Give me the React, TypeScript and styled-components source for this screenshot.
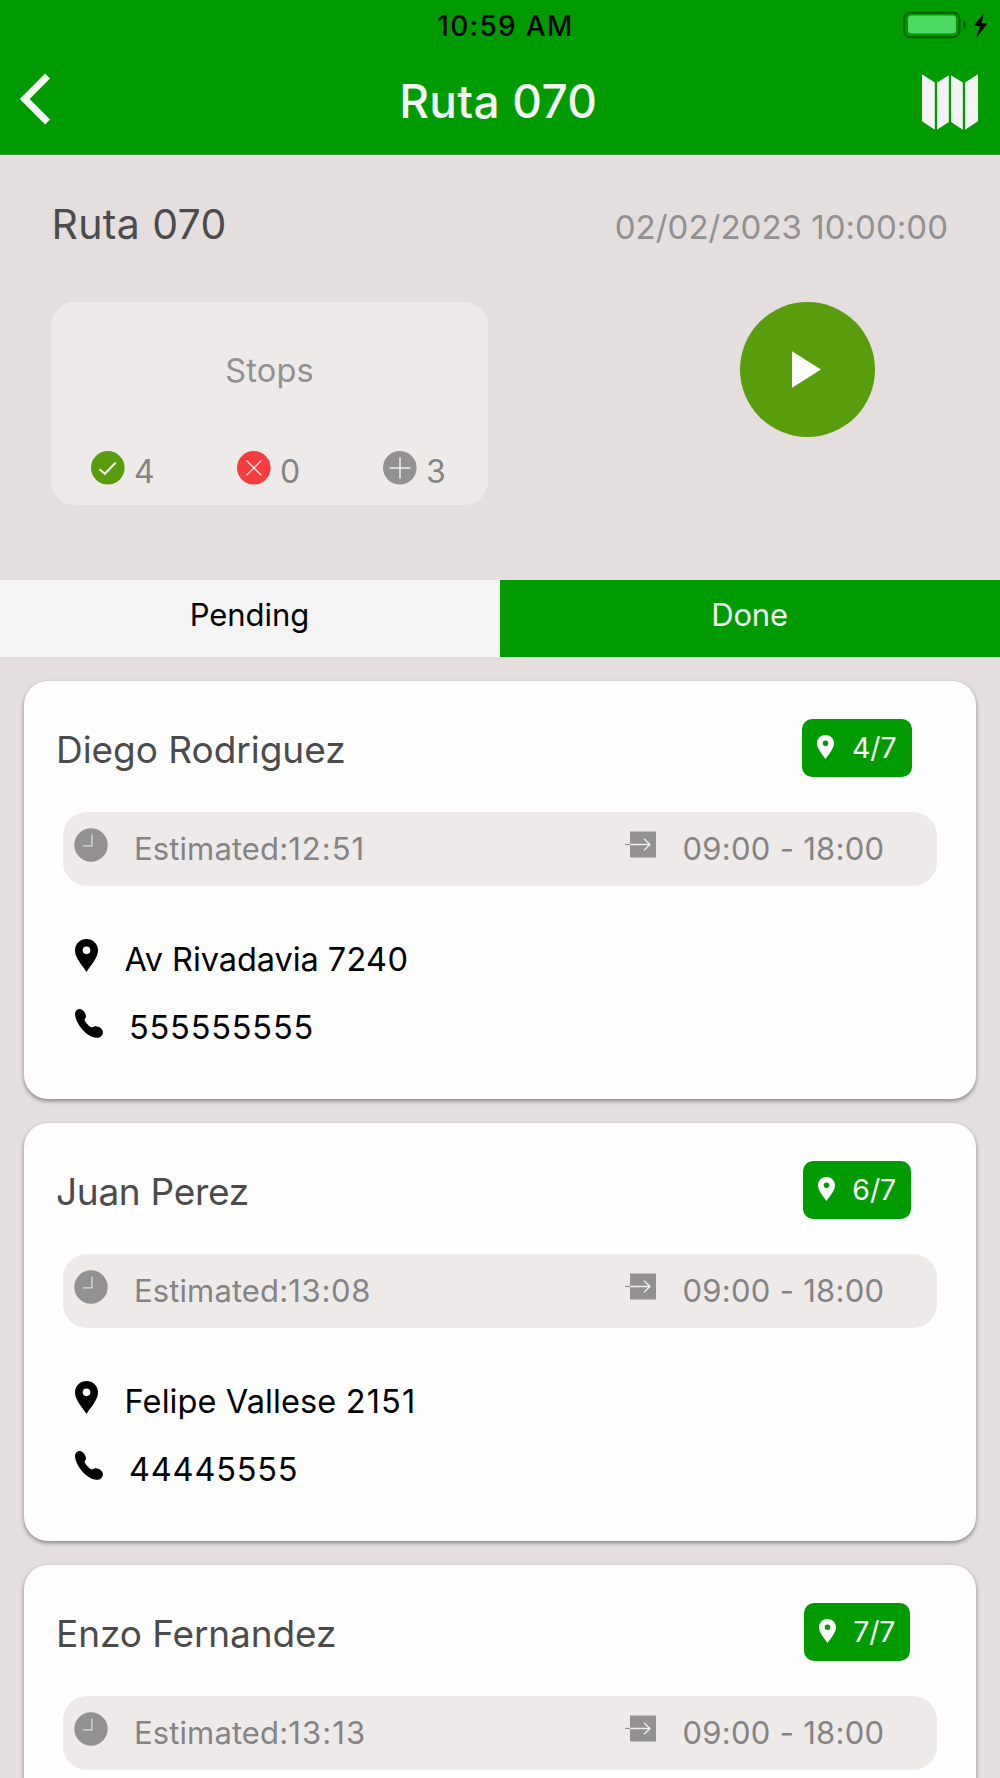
import React from 'react';
import styled, { createGlobalStyle } from 'styled-components';

const GREEN = '#009b00';
const OLIVE = '#579d0c';
const GREY = '#929091';
const PANEL = '#eeeaea';

const GlobalStyle = createGlobalStyle`
  * { box-sizing: border-box; }
  body {
    margin: 0;
    background: #e4dedf;
    font-family: Inter, "Liberation Sans", sans-serif;
    -webkit-font-smoothing: antialiased;
  }
`;

const Screen = styled.div`
  width: 1000px;
  height: 1778px;
  overflow: hidden;
  display: flex;
  flex-direction: column;
`;

const Text = styled.span<{ $size: number; $color: string; $weight?: number; $spacing?: number }>`
  font-size: ${p => p.$size}px;
  color: ${p => p.$color};
  font-weight: ${p => p.$weight ?? 400};
  letter-spacing: ${p => p.$spacing ?? 0}px;
  white-space: pre;
`;

const Digits = styled.span<{ $spacing: number }>`
  letter-spacing: ${p => p.$spacing}px;
`;

const Header = styled.header`
  height: 155px;
  flex: none;
  background: ${GREEN};
  border-bottom: 1px solid #3c8f3c;
`;

const StatusBar = styled.div`
  height: 51px;
  display: grid;
  grid-template-columns: 1fr auto 1fr;
  align-items: center;
  padding: 0 11px 0 22px;
`;

const Power = styled.div`
  grid-column: 3;
  justify-self: end;
  display: flex;
  margin-bottom: 2px;
`;

const Clock = styled.div`
  grid-column: 2;
`;

const NavBar = styled.div`
  height: 101px;
  display: grid;
  grid-template-columns: 56px 1fr 56px;
  align-items: center;
  padding: 0 22px 0 18.5px;
  text-align: center;
`;

const NavTitle = styled.div`
  padding-bottom: 2px;
`;

const BackIcon = styled.svg`
  display: block;
  margin-bottom: 5px;
`;

const Summary = styled.section`
  height: 425px;
  flex: none;
  padding: 44px 52px 0 51.5px;
`;

const SummaryHead = styled.div`
  display: flex;
  height: 50px;
  justify-content: space-between;
  align-items: baseline;
  line-height: 50px;
`;

const SummaryBody = styled.div`
  display: flex;
  justify-content: space-between;
  margin: 53px 73px 0 -0.5px;
`;

const StopsCard = styled.div`
  width: 437px;
  height: 203px;
  border-radius: 24px;
  background: ${PANEL};
  padding-top: 49px;
  text-align: center;
`;

const StopsLabel = styled.div`
  height: 40px;
  line-height: 40px;
`;

const Counters = styled.div`
  display: grid;
  grid-template-columns: repeat(3, 146px);
  margin-top: 60px;
  line-height: 41px;
`;

const Counter = styled.div`
  display: flex;
  gap: 9px;
  padding-left: 40px;
`;

const PlayButton = styled.button`
  width: 135px;
  height: 135px;
  border: 0;
  padding: 0 0 0 52px;
  border-radius: 50%;
  background: ${OLIVE};
  display: flex;
  align-items: center;
`;

const Tabs = styled.nav`
  display: grid;
  grid-template-columns: 1fr 1fr;
  flex: none;
`;

const Tab = styled.div<{ $active?: boolean }>`
  height: 77px;
  line-height: 69px;
  padding-right: 1px;
  text-align: center;
  background: ${p => (p.$active ? GREEN : '#f4f4f4')};
`;

const List = styled.main`
  display: flex;
  flex-direction: column;
  gap: 24px;
  padding: 24px;
`;

const Card = styled.article`
  height: 418px;
  flex: none;
  border-radius: 24px;
  background: #fefefe;
  box-shadow: 0 2px 4px rgba(0, 0, 0, 0.42);
  padding: 38px 39px 0;
`;

const CardHead = styled.div`
  display: grid;
  grid-template-columns: 1fr 160px;
  line-height: 61px;
  height: 58px;
  margin-left: -7px;
`;

const Badge = styled.div`
  justify-self: center;
  height: 58px;
  display: flex;
  align-items: center;
  gap: 17.5px;
  padding: 0 15px;
  border-radius: 10px;
  background: ${GREEN};
  line-height: 58px;
`;

const InfoBar = styled.div`
  display: grid;
  grid-template-columns: 562px 1fr;
  height: 74px;
  margin-top: 35px;
  border-radius: 24px;
  background: ${PANEL};
  line-height: 74px;
`;

const Info = styled.div<{ $gap: number; $inset?: number }>`
  display: flex;
  align-items: center;
  gap: ${p => p.$gap}px;
  padding-left: ${p => p.$inset ?? 0}px;
`;

const Raised = styled.svg<{ $lift: number }>`
  display: block;
  flex: none;
  margin-bottom: ${p => p.$lift}px;
`;

const Contacts = styled.div`
  margin-top: 40px;
  line-height: 68px;
`;

const PIN = 'M79.5 42C98 42 114 56 114 76C114 98 95 118 79.5 141C64 118 45 98 45 76C45 56 61 42 79.5 42ZM79.5 64.5a11.5 11.5 0 1 0 0 23a11.5 11.5 0 1 0 0-23Z';

function PinIcon({ width, height, color, lift }: { width: number; height: number; color: string; lift: number }) {
  return (
    <Raised $lift={lift} width={width} height={height} viewBox="45 42 69 99" preserveAspectRatio="none">
      <path d={PIN} fill={color} fillRule="evenodd" />
    </Raised>
  );
}

function PhoneIcon() {
  return (
    <Raised $lift={9} width="28" height="29" viewBox="45 251.5 84 87">
      <path d="M45 268C45 257 53 250 62 252C70 254 78 264 78 273C78 279 73 281 74 285C78 294 86 301 93 306C98 308 100 304 106 303C116 302 129 311 129 321C128 331 120 339 109 338C80 336 48 297 45 268Z" />
    </Raised>
  );
}

function ClockIcon() {
  return (
    <Raised $lift={9} width="34" height="34" viewBox="0 0 34 34">
      <circle cx="17" cy="17" r="16.7" fill={GREY} />
      <path d="M17.9 6.5V17.8H9" fill="none" stroke="#e0dddd" strokeWidth="1.2" />
    </Raised>
  );
}

function EnterIcon() {
  return (
    <Raised $lift={9} width="31" height="27" viewBox="0 0 31 27">
      <path d="M5 .5H31V26.5H5Z" fill={GREY} />
      <path d="M0 13.5H5" stroke={GREY} strokeWidth="1.2" />
      <path d="M5 13.5H25M19 7.7L25 13.5L19 19.3" fill="none" stroke="#f2efef" strokeWidth="1.3" />
    </Raised>
  );
}

function CountIcon({ color, children }: { color: string; children: React.ReactNode }) {
  return (
    <svg width="34" height="34" viewBox="0 0 34 34" fill="none" stroke="#f4f0f0">
      <circle cx="16.8" cy="16.8" r="16.8" fill={color} stroke="none" />
      {children}
    </svg>
  );
}

interface Stop {
  name: string;
  nameSpacing: number;
  order: string;
  eta: string;
  etaSpacing: number;
  street?: string;
  streetSpacing?: number;
  number?: string;
  numberSpacing?: number;
  phone?: string;
}

const stops: Stop[] = [
  { name: 'Diego Rodriguez', nameSpacing: -0.04, order: '4/7', eta: '12:51', etaSpacing: 1, street: 'Av Rivadavia ', streetSpacing: -0.06, number: '7240', numberSpacing: 0.3, phone: '555555555' },
  { name: 'Juan Perez', nameSpacing: -0.3, order: '6/7', eta: '13:08', etaSpacing: 0.7, street: 'Felipe Vallese ', streetSpacing: 0.1, number: '2151', numberSpacing: 1.2, phone: '44445555' },
  { name: 'Enzo Fernandez', nameSpacing: -0.09, order: '7/7', eta: '13:13', etaSpacing: 1.1 },
];

function StopCard({ stop }: { stop: Stop }) {
  return (
    <Card>
      <CardHead>
        <Text $size={37} $color="#4b4b4b" $spacing={stop.nameSpacing}>{stop.name}</Text>
        <Badge>
          <PinIcon width={17} height={24} color="#fff" lift={3} />
          <Text $size={28.5} $color="#fff" $spacing={-0.1}>{stop.order}</Text>
        </Badge>
      </CardHead>
      <InfoBar>
        <Info $gap={25.7} $inset={11.3}>
          <ClockIcon />
          <Text $size={31} $color="#858384" $spacing={0.12}>
            Estimated:<Digits $spacing={stop.etaSpacing}>{stop.eta}</Digits>
          </Text>
        </Info>
        <Info $gap={26.5}>
          <EnterIcon />
          <Text $size={31} $color="#858384" $spacing={0.27}>09:00 - 18:00</Text>
        </Info>
      </InfoBar>
      {stop.street && (
        <Contacts>
          <Info $gap={26.6} $inset={12}>
            <PinIcon width={23} height={33} color="#000" lift={9} />
            <Text $size={32.5} $color="#000" $spacing={stop.streetSpacing}>
              {stop.street}<Digits $spacing={stop.numberSpacing ?? 0}>{stop.number}</Digits>
            </Text>
          </Info>
          <Info $gap={26} $inset={12}>
            <PhoneIcon />
            <Text $size={32.5} $color="#000" $spacing={0.8}>{stop.phone}</Text>
          </Info>
        </Contacts>
      )}
    </Card>
  );
}

export default function App() {
  return (
    <Screen>
      <GlobalStyle />
      <Header>
        <StatusBar>
          <Clock><Text $size={28} $color="#000" $weight={500} $spacing={1.29}>10:59 AM</Text></Clock>
          <Power>
            <svg width="86" height="28" viewBox="903 10.5 86 28">
              <rect x="904.1" y="12" width="55.4" height="24.8" rx="6.5" fill="none" stroke="#005d00" strokeWidth="2" />
              <rect x="908" y="15" width="48" height="18" rx="3.5" fill="#4cd964" />
              <path d="M963 19.5Q966 21 966 24.3T963 29Z" fill="#005d00" />
              <path d="M984 12.3L973.6 25.4H980L976.3 37.3L987.8 22.4H981.6Z" />
            </svg>
          </Power>
        </StatusBar>
        <NavBar>
          <BackIcon width="32" height="52" viewBox="0 0 32 52">
            <path d="M28.6 3L5.7 26L28.6 49" fill="none" stroke="#f4f4f4" strokeWidth="7" />
          </BackIcon>
          <NavTitle><Text $size={46} $color="#f4f4f4" $weight={500} $spacing={0.27}>Ruta 070</Text></NavTitle>
          <svg width="56" height="56" viewBox="0 0 56 56" fill="#f4f4f4">
            <path d="M0 .3L12.8 8.5V55.7L0 47.3ZM15 8.5L26.8 1.3V48L15 55.7ZM29 1.3L40.8 8.5V55.7L29 48ZM43 8.5L56 .3V47.3L43 55.7Z" />
          </svg>
        </NavBar>
      </Header>

      <Summary>
        <SummaryHead>
          <Text $size={41} $color="#4b4b4b" $spacing={0.37}>Ruta 070</Text>
          <Text $size={33} $color={GREY} $spacing={0.02}>02/02/2023 10:00:00</Text>
        </SummaryHead>
        <SummaryBody>
          <StopsCard>
            <StopsLabel><Text $size={32.5} $color={GREY} $spacing={0.2}>Stops</Text></StopsLabel>
            <Counters>
              <Counter>
                <CountIcon color={OLIVE}><path d="M8.6 18.2L13.8 22.8L24.8 11.5" strokeWidth="2" /></CountIcon>
                <Text $size={32} $color="#858384">4</Text>
              </Counter>
              <Counter>
                <CountIcon color="#f63c3c"><path d="M9.4 9.4L24.4 24.4M24.4 9.4L9.4 24.4" strokeWidth="1.3" /></CountIcon>
                <Text $size={32} $color="#858384">0</Text>
              </Counter>
              <Counter>
                <CountIcon color={GREY}><path d="M17 6.6V27.4M6.6 17H27.4" strokeWidth="1.4" /></CountIcon>
                <Text $size={32} $color="#858384">3</Text>
              </Counter>
            </Counters>
          </StopsCard>
          <PlayButton>
            <svg width="29" height="37" viewBox="0 0 29 37" fill="#fff"><path d="M0 .3L29 18.5L0 36.7Z" /></svg>
          </PlayButton>
        </SummaryBody>
      </Summary>

      <Tabs>
        <Tab><Text $size={31} $color="#000" $spacing={-0.05}>Pending</Text></Tab>
        <Tab $active><Text $size={31} $color="#f4f4f4" $spacing={-0.2}>Done</Text></Tab>
      </Tabs>

      <List>
        {stops.map(stop => <StopCard key={stop.name} stop={stop} />)}
      </List>
    </Screen>
  );
}
